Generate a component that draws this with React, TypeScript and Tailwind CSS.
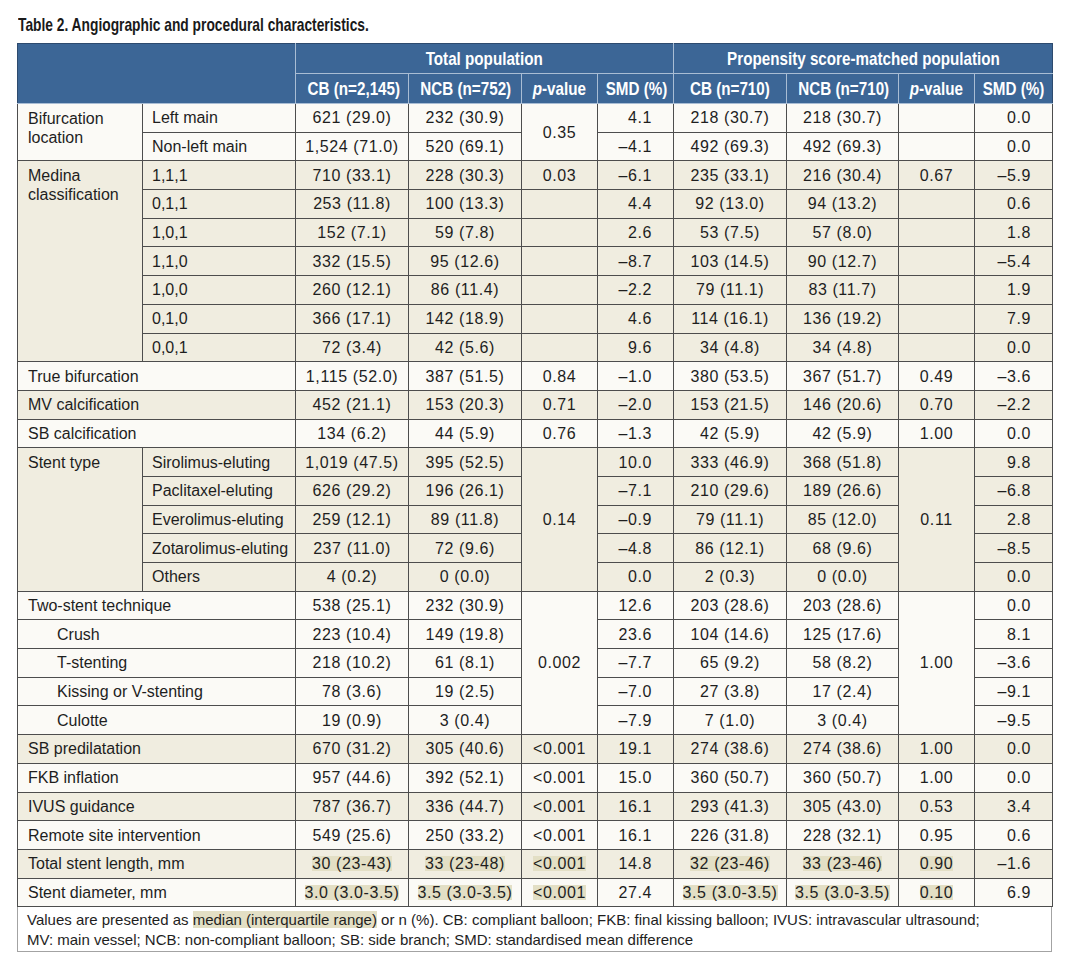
import React from "react";

type Kind = "label" | "sub" | "num" | "p" | "smd";
type C = { t: string; k: Kind; rs?: number; cs?: number; hl?: boolean; indent?: boolean; top?: boolean };
type R = { bg: "w" | "b"; cells: C[] };

const L = (t: string, o: Partial<C> = {}): C => ({ t, k: "label", ...o });
const S = (t: string, o: Partial<C> = {}): C => ({ t, k: "sub", ...o });
const N = (t: string, hl = false): C => ({ t, k: "num", hl });
const P = (t: string, rs = 1, hl = false): C => ({ t, k: "p", rs, hl });
const M = (t: string): C => ({ t, k: "smd" });

const rows: R[] = [
  { bg: "w", cells: [L("Bifurcation location", { rs: 2, top: true }), S("Left main"), N("621 (29.0)"), N("232 (30.9)"), P("0.35", 2), M("4.1"), N("218 (30.7)"), N("218 (30.7)"), P(""), M("0.0")] },
  { bg: "w", cells: [S("Non-left main"), N("1,524 (71.0)"), N("520 (69.1)"), M("–4.1"), N("492 (69.3)"), N("492 (69.3)"), P(""), M("0.0")] },
  { bg: "b", cells: [L("Medina classification", { rs: 7, top: true }), S("1,1,1"), N("710 (33.1)"), N("228 (30.3)"), P("0.03"), M("–6.1"), N("235 (33.1)"), N("216 (30.4)"), P("0.67"), M("–5.9")] },
  { bg: "b", cells: [S("0,1,1"), N("253 (11.8)"), N("100 (13.3)"), P(""), M("4.4"), N("92 (13.0)"), N("94 (13.2)"), P(""), M("0.6")] },
  { bg: "b", cells: [S("1,0,1"), N("152 (7.1)"), N("59 (7.8)"), P(""), M("2.6"), N("53 (7.5)"), N("57 (8.0)"), P(""), M("1.8")] },
  { bg: "b", cells: [S("1,1,0"), N("332 (15.5)"), N("95 (12.6)"), P(""), M("–8.7"), N("103 (14.5)"), N("90 (12.7)"), P(""), M("–5.4")] },
  { bg: "b", cells: [S("1,0,0"), N("260 (12.1)"), N("86 (11.4)"), P(""), M("–2.2"), N("79 (11.1)"), N("83 (11.7)"), P(""), M("1.9")] },
  { bg: "b", cells: [S("0,1,0"), N("366 (17.1)"), N("142 (18.9)"), P(""), M("4.6"), N("114 (16.1)"), N("136 (19.2)"), P(""), M("7.9")] },
  { bg: "b", cells: [S("0,0,1"), N("72 (3.4)"), N("42 (5.6)"), P(""), M("9.6"), N("34 (4.8)"), N("34 (4.8)"), P(""), M("0.0")] },
  { bg: "w", cells: [L("True bifurcation", { cs: 2 }), N("1,115 (52.0)"), N("387 (51.5)"), P("0.84"), M("–1.0"), N("380 (53.5)"), N("367 (51.7)"), P("0.49"), M("–3.6")] },
  { bg: "b", cells: [L("MV calcification", { cs: 2 }), N("452 (21.1)"), N("153 (20.3)"), P("0.71"), M("–2.0"), N("153 (21.5)"), N("146 (20.6)"), P("0.70"), M("–2.2")] },
  { bg: "w", cells: [L("SB calcification", { cs: 2 }), N("134 (6.2)"), N("44 (5.9)"), P("0.76"), M("–1.3"), N("42 (5.9)"), N("42 (5.9)"), P("1.00"), M("0.0")] },
  { bg: "b", cells: [L("Stent type", { rs: 5, top: true }), S("Sirolimus-eluting"), N("1,019 (47.5)"), N("395 (52.5)"), P("0.14", 5), M("10.0"), N("333 (46.9)"), N("368 (51.8)"), P("0.11", 5), M("9.8")] },
  { bg: "b", cells: [S("Paclitaxel-eluting"), N("626 (29.2)"), N("196 (26.1)"), M("–7.1"), N("210 (29.6)"), N("189 (26.6)"), M("–6.8")] },
  { bg: "b", cells: [S("Everolimus-eluting"), N("259 (12.1)"), N("89 (11.8)"), M("–0.9"), N("79 (11.1)"), N("85 (12.0)"), M("2.8")] },
  { bg: "b", cells: [S("Zotarolimus-eluting"), N("237 (11.0)"), N("72 (9.6)"), M("–4.8"), N("86 (12.1)"), N("68 (9.6)"), M("–8.5")] },
  { bg: "b", cells: [S("Others"), N("4 (0.2)"), N("0 (0.0)"), M("0.0"), N("2 (0.3)"), N("0 (0.0)"), M("0.0")] },
  { bg: "w", cells: [L("Two-stent technique", { cs: 2 }), N("538 (25.1)"), N("232 (30.9)"), P("0.002", 5), M("12.6"), N("203 (28.6)"), N("203 (28.6)"), P("1.00", 5), M("0.0")] },
  { bg: "w", cells: [L("Crush", { cs: 2, indent: true }), N("223 (10.4)"), N("149 (19.8)"), M("23.6"), N("104 (14.6)"), N("125 (17.6)"), M("8.1")] },
  { bg: "w", cells: [L("T-stenting", { cs: 2, indent: true }), N("218 (10.2)"), N("61 (8.1)"), M("–7.7"), N("65 (9.2)"), N("58 (8.2)"), M("–3.6")] },
  { bg: "w", cells: [L("Kissing or V-stenting", { cs: 2, indent: true }), N("78 (3.6)"), N("19 (2.5)"), M("–7.0"), N("27 (3.8)"), N("17 (2.4)"), M("–9.1")] },
  { bg: "w", cells: [L("Culotte", { cs: 2, indent: true }), N("19 (0.9)"), N("3 (0.4)"), M("–7.9"), N("7 (1.0)"), N("3 (0.4)"), M("–9.5")] },
  { bg: "b", cells: [L("SB predilatation", { cs: 2 }), N("670 (31.2)"), N("305 (40.6)"), P("<0.001"), M("19.1"), N("274 (38.6)"), N("274 (38.6)"), P("1.00"), M("0.0")] },
  { bg: "w", cells: [L("FKB inflation", { cs: 2 }), N("957 (44.6)"), N("392 (52.1)"), P("<0.001"), M("15.0"), N("360 (50.7)"), N("360 (50.7)"), P("1.00"), M("0.0")] },
  { bg: "b", cells: [L("IVUS guidance", { cs: 2 }), N("787 (36.7)"), N("336 (44.7)"), P("<0.001"), M("16.1"), N("293 (41.3)"), N("305 (43.0)"), P("0.53"), M("3.4")] },
  { bg: "w", cells: [L("Remote site intervention", { cs: 2 }), N("549 (25.6)"), N("250 (33.2)"), P("<0.001"), M("16.1"), N("226 (31.8)"), N("228 (32.1)"), P("0.95"), M("0.6")] },
  { bg: "b", cells: [L("Total stent length, mm", { cs: 2 }), N("30 (23-43)", true), N("33 (23-48)", true), P("<0.001", 1, true), M("14.8"), N("32 (23-46)", true), N("33 (23-46)", true), P("0.90", 1, true), M("–1.6")] },
  { bg: "w", cells: [L("Stent diameter, mm", { cs: 2 }), N("3.0 (3.0-3.5)", true), N("3.5 (3.0-3.5)", true), P("<0.001", 1, true), M("27.4"), N("3.5 (3.0-3.5)", true), N("3.5 (3.0-3.5)", true), P("0.10", 1, true), M("6.9")] },
];

const Hl = ({ children }: { children: React.ReactNode }) => (
  <span className="inline-block bg-[#e3dfc5] leading-[15px]">{children}</span>
);

function Cell({ c }: { c: C }) {
  const base = "border border-[#4d4d4d] text-[16px] leading-[19px] text-[#1e1e1e] p-0";
  if (c.k === "label" || c.k === "sub") {
    return (
      <td
        rowSpan={c.rs}
        colSpan={c.cs}
        className={`${base} text-left ${c.top ? "align-top pt-[5px] whitespace-normal" : "align-middle whitespace-nowrap"} ${c.k === "sub" ? "pl-[9px]" : c.indent ? "pl-[39px]" : "pl-[10px]"}`}
      >
        {c.t}
      </td>
    );
  }
  const content = c.hl ? <Hl>{c.t}</Hl> : c.t;
  if (c.k === "smd") {
    return (
      <td className={`${base} whitespace-nowrap text-right align-middle pr-[21px] tracking-[0.6px]`}>{content}</td>
    );
  }
  return (
    <td rowSpan={c.rs} className={`${base} whitespace-nowrap text-center align-middle tracking-[0.6px]`}>
      {content}
    </td>
  );
}

const Nar = ({ children }: { children: React.ReactNode }) => (
  <span className="inline-block whitespace-nowrap scale-x-[0.8]">{children}</span>
);

export default function App() {
  const th1 = "border border-[#a9bdd4] bg-[#3c6696] text-white font-bold text-[19px] leading-[22px] p-0 whitespace-nowrap overflow-visible";
  return (
    <div className="min-h-[967px] w-[1073px] bg-white font-['Liberation_Sans',Arial,sans-serif]">
      <div className="pl-[18px] pt-[13px] h-[43px] text-[18.5px] leading-[24px] font-bold text-[#1a1a1a] whitespace-nowrap">
        <span className="inline-block origin-left scale-x-[0.745]">Table 2. Angiographic and procedural characteristics.</span>
      </div>
      <table className="ml-[17px] w-[1035px] table-fixed border-collapse">
        <colgroup>
          <col className="w-[125px]" />
          <col className="w-[153px]" />
          <col className="w-[113px]" />
          <col className="w-[113px]" />
          <col className="w-[76px]" />
          <col className="w-[76px]" />
          <col className="w-[113px]" />
          <col className="w-[112px]" />
          <col className="w-[76px]" />
          <col className="w-[78px]" />
        </colgroup>
        <thead>
          <tr className="h-[30px]">
            <th colSpan={2} rowSpan={2} className={`${th1} border-l-[#2d4a6e] border-t-[#2d4a6e] border-r-[#a9bdd4]`}></th>
            <th colSpan={4} className={`${th1} border-t-[#2d4a6e]`}><Nar>Total population</Nar></th>
            <th colSpan={4} className={`${th1} border-t-[#2d4a6e] border-r-[#2d4a6e]`}><Nar>Propensity score-matched population</Nar></th>
          </tr>
          <tr className="h-[30px]">
            <th className={th1}><Nar>CB (n=2,145)</Nar></th>
            <th className={th1}><Nar>NCB (n=752)</Nar></th>
            <th className={th1}><Nar><i>p</i>-value</Nar></th>
            <th className={th1}><Nar>SMD (%)</Nar></th>
            <th className={th1}><Nar>CB (n=710)</Nar></th>
            <th className={th1}><Nar>NCB (n=710)</Nar></th>
            <th className={th1}><Nar><i>p</i>-value</Nar></th>
            <th className={`${th1} border-r-[#2d4a6e]`}><Nar>SMD (%)</Nar></th>
          </tr>
        </thead>
        <tbody>
          {rows.map((r, i) => (
            <tr key={i} className={`h-[28.7px] ${r.bg === "w" ? "bg-[#fbfaf6]" : "bg-[#f0ede0]"}`}>
              {r.cells.map((c, j) => (
                <Cell key={j} c={c} />
              ))}
            </tr>
          ))}
        </tbody>
      </table>
      <div className="ml-[17px] w-[1035px] border border-t-0 border-[#a3a3a3] pl-[9px] pt-[3px] pb-[2px] h-[45px] text-[15px] leading-[20px] text-[#1e1e1e]">
        Values are presented as <span className="bg-[#e3dfc5]">median (interquartile range)</span> or n (%). CB: compliant balloon; FKB: final kissing balloon; IVUS: intravascular ultrasound;
        <br />
        MV: main vessel; NCB: non-compliant balloon; SB: side branch; SMD: standardised mean difference
      </div>
    </div>
  );
}
